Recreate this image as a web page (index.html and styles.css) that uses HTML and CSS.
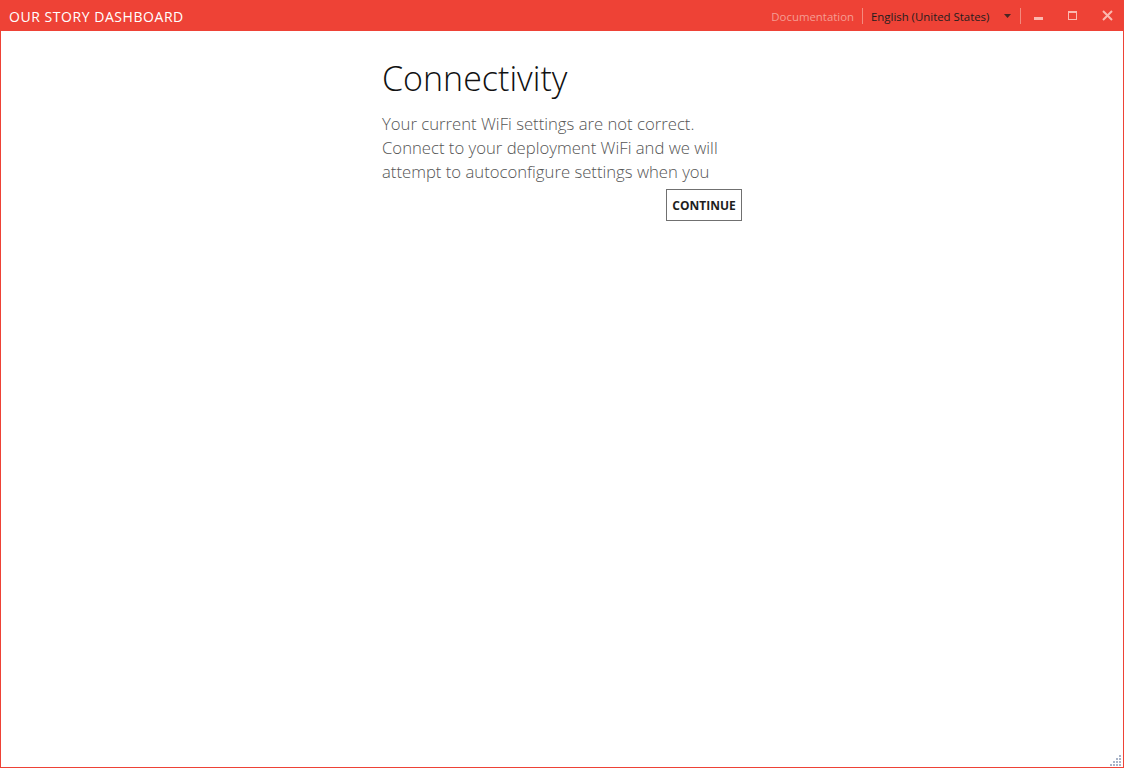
FILE: index.html
```html
<!DOCTYPE html>
<html lang="en">
<head>
<meta charset="utf-8">
<title>Our Story Dashboard</title>
<link rel="stylesheet" href="styles.css">
</head>
<body>
<div class="window">
  <header class="titlebar">
    <div class="app-title">OUR STORY DASHBOARD</div>
    <div class="bar-right">
      <a class="doc-link">Documentation</a>
      <span class="sep"></span>
      <div class="lang">
        <span class="lang-text">English (United States)</span>
        <svg class="lang-arrow" width="7" height="4" viewBox="0 0 7 4"><path d="M0 0h7L3.5 4z" fill="#4a2622"/></svg>
      </div>
      <span class="sep"></span>
      <div class="win-btns">
        <button class="win-btn"><svg width="10" height="10" viewBox="0 0 10 10"><rect x="0" y="6" width="9" height="3" fill="#fbb9b0"/></svg></button>
        <button class="win-btn"><svg width="10" height="10" viewBox="0 0 10 10"><rect x="0.5" y="0.5" width="8" height="8" fill="none" stroke="#fbb9b0"/><rect x="0" y="0" width="9" height="2" fill="#fbb9b0"/></svg></button>
        <button class="win-btn"><svg width="11" height="11" viewBox="0 0 11 11"><path d="M1 1L10 10M10 1L1 10" stroke="#fbb9b0" stroke-width="2"/></svg></button>
      </div>
    </div>
  </header>
  <main class="content">
    <section class="panel">
      <h1 class="heading">Connectivity</h1>
      <p class="message">Your current WiFi settings are not correct.<br>Connect to your deployment WiFi and we will<br>attempt to autoconfigure settings when you</p>
      <div class="actions">
        <button class="continue">CONTINUE</button>
      </div>
    </section>
  </main>
  <svg class="grip" width="12" height="12" viewBox="0 0 12 12">
    <g fill="#a9b4c8">
      <rect x="9" y="1" width="2" height="2"/>
      <rect x="6" y="4" width="2" height="2"/><rect x="9" y="4" width="2" height="2"/>
      <rect x="3" y="7" width="2" height="2"/><rect x="6" y="7" width="2" height="2"/><rect x="9" y="7" width="2" height="2"/>
      <rect x="0" y="10" width="2" height="2"/><rect x="3" y="10" width="2" height="2"/><rect x="6" y="10" width="2" height="2"/><rect x="9" y="10" width="2" height="2"/>
    </g>
  </svg>
</div>
</body>
</html>
```
FILE: styles.css
```css
* { box-sizing: border-box; }
html, body { margin: 0; padding: 0; }
body {
  width: 1124px;
  height: 768px;
  overflow: hidden;
  font-family: "Open Sans", "Noto Sans", sans-serif;
  background: #ffffff;
}
.window {
  position: relative;
  width: 1124px;
  height: 768px;
  border: 1px solid #ee4236;
  border-top: 0;
  display: flex;
  flex-direction: column;
  background: #fff;
}
.titlebar {
  height: 31px;
  margin: 0 -1px;
  background: #ee4236;
  display: flex;
  align-items: center;
  justify-content: space-between;
}
.app-title {
  padding-left: 9px;
  padding-top: 1px;
  color: #fff;
  font-size: 14px;
  font-weight: 400;
  letter-spacing: 0.55px;
}
.bar-right {
  display: flex;
  align-items: center;
  height: 100%;
}
.doc-link {
  color: #f59d93;
  font-size: 11.4px;
  margin-right: 8px;
  padding-top: 1px;
}
.sep {
  width: 1px;
  height: 16px;
  background: #f48a7e;
}
.lang {
  display: flex;
  align-items: center;
  padding-left: 8px;
  padding-right: 9px;
}
.lang-text {
  font-size: 11.4px;
  color: #1e1e1e;
  width: 133px;
  padding-top: 1px;
}
.lang-arrow { display: block; margin-top: 1px; }
.win-btns {
  display: flex;
  height: 100%;
  padding-left: 1px;
}
.win-btn {
  border: 0;
  background: transparent;
  padding: 0;
  width: 34px;
  height: 100%;
  display: flex;
  align-items: center;
  justify-content: center;
}
.win-btn svg { display: block; }
.content {
  flex: 1;
  display: flex;
  justify-content: center;
}
.panel {
  width: 360px;
  padding-top: 24px;
}
.heading {
  margin: 0;
  font-weight: 300;
  font-size: 34px;
  line-height: 46px;
  color: #111;
}
.message {
  margin: 11px 0 0;
  font-size: 16.7px;
  font-weight: 300;
  line-height: 24px;
  color: #555;
}
.actions {
  display: flex;
  justify-content: flex-end;
  margin-top: 5px;
}
.continue {
  font-family: "Open Sans", "Noto Sans", sans-serif;
  font-size: 12px;
  font-weight: 700;
  color: #1e1e1e;
  background: #fff;
  border: 1px solid #707070;
  width: 76px;
  height: 32px;
  padding: 0;
}
.grip {
  position: absolute;
  right: 1px;
  bottom: 1px;
}
```
